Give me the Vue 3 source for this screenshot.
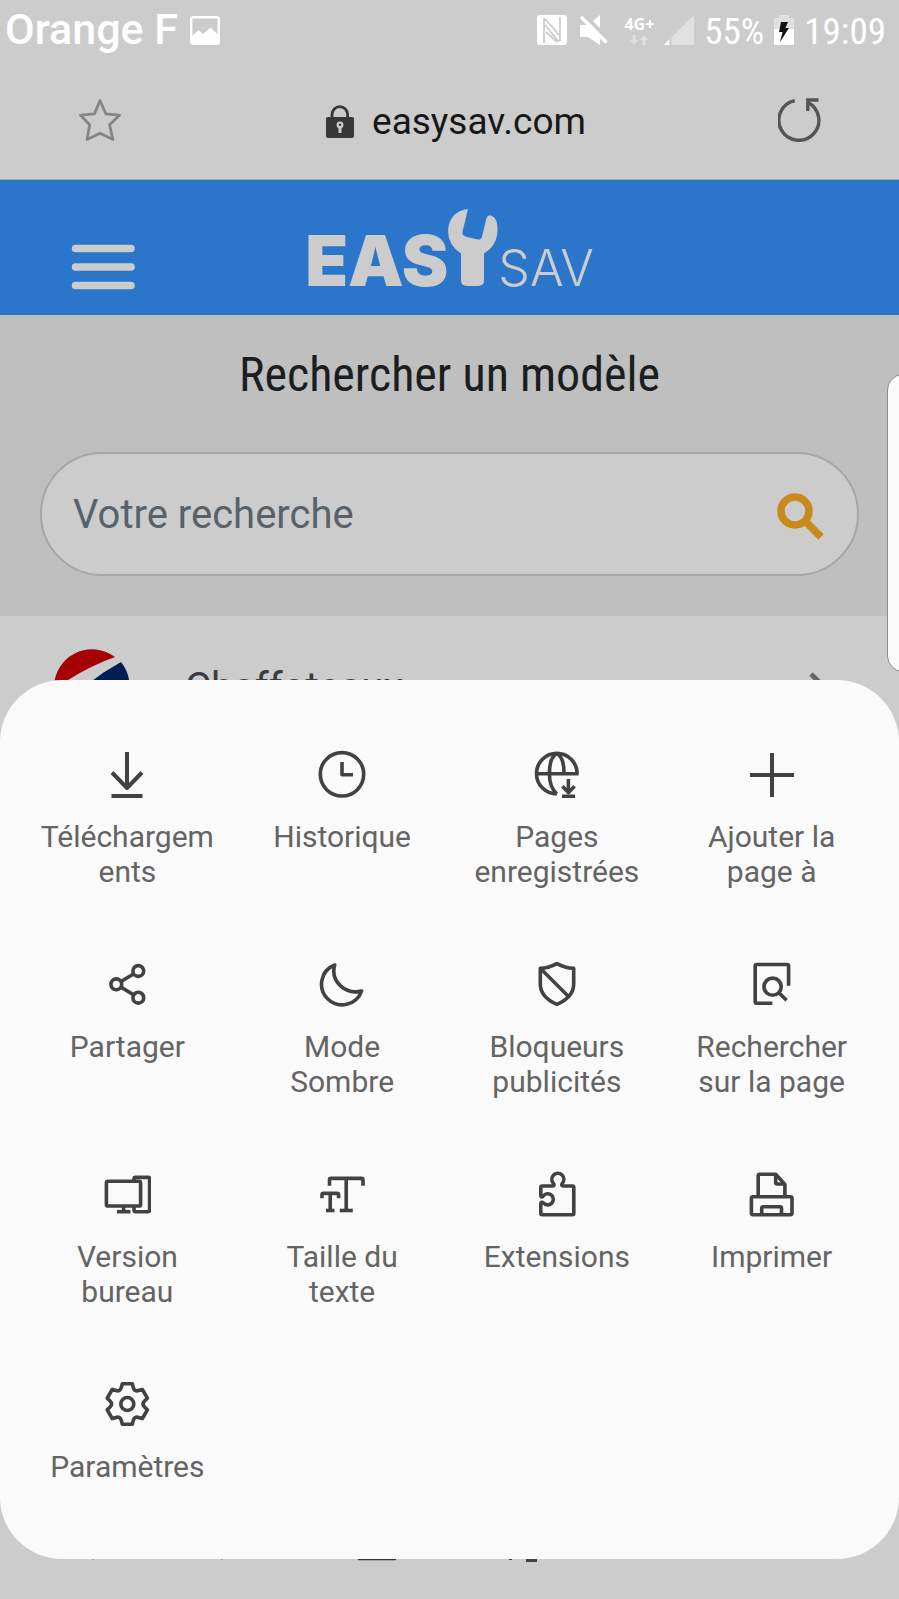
<script setup>
import { ref } from 'vue'

const query = ref('')

const circle = (cx, cy, r) =>
  `M${cx - r} ${cy}a${r} ${r} 0 1 0 ${2 * r} 0a${r} ${r} 0 1 0 ${-2 * r} 0Z`

// Six-toothed cog: one tooth profile turned round the centre
const gear = (cx, cy) => {
  const turn = (x, y, i) => {
    const a = (i * Math.PI) / 3
    return `${(cx + x * Math.cos(a) - y * Math.sin(a)).toFixed(2)} ${(cy + x * Math.sin(a) + y * Math.cos(a)).toFixed(2)}`
  }
  let d = ''
  for (let i = 0; i < 6; i++) {
    d += `${i ? 'L' : 'M'}${turn(-5, -20.3, i)}L${turn(5, -20.3, i)}L${turn(6, -16.4, i)}Q${turn(7.1, -12.3, i)} ${turn(-6, -16.4, i + 1)}`
  }
  return d + 'Z'
}

const items = [
  { label: 'Téléchargements', stroke: 4, paths: ['M24 2V38', 'M9 22.5L24 38L39 22.5', 'M8.5 46H39.5'] },
  { label: 'Historique', paths: [circle(24, 24.3, 21.7), 'M24 12V24.7H35'] },
  {
    label: 'Pages enregistrées',
    paths: [
      'M45.6 23.7H3.5',
      'M44.1 23.7A20.3 20.3 0 1 0 23.8 44',
      'M23.8 3.4C19 6 16.4 14 16.4 23.7S18.5 39 23.8 44',
      'M23.8 3.4C28.5 6 31.1 14 31.1 23.7',
      'M35.4 29V43',
      'M29.4 36.3L35.4 42.6L41.6 36.3',
      'M29 46.3H42',
    ],
  },
  { label: 'Ajouter la page à', stroke: 4, paths: ['M24 3V47', 'M2 25H46'] },
  {
    label: 'Partager',
    paths: [circle(13.3, 24.3, 5.4), circle(35.3, 11, 5.4), circle(35.3, 37.7, 5.4), 'M18 21.5L30.5 14', 'M18 27.1L30.5 34.8'],
  },
  { label: 'Mode Sombre', paths: ['M16.7 5A20.6 20.6 0 1 0 43.6 31C28 35 12 22 16.7 5Z'] },
  {
    label: 'Bloqueurs publicités',
    paths: ['M23.9 3.6Q16 8 7.3 8.4V24C7.3 34 14 40 23.9 44.4C34 40 40.7 34 40.7 24V8.4Q32 8 23.9 3.6Z', 'M8.5 9.5L35.5 36.5'],
  },
  {
    label: 'Rechercher sur la page',
    paths: ['M24.4 43.3H8.7Q7.2 43.3 7.2 41.8V6Q7.2 4.5 8.7 4.5H39.1Q40.6 4.5 40.6 6V25.7', circle(24.6, 26.7, 8.6), 'M31 32.900L38.6 40.2'],
  },
  {
    label: 'Version bureau',
    paths: [
      'M5 11.3H36Q37.6 11.3 37.6 12.9V34.4Q37.6 36 36 36H5Q3.4 36 3.4 34.4V12.9Q3.4 11.3 5 11.3Z',
      'M20.6 36V41.6',
      'M14 41.7H27.4',
      'M31 11V9Q31 7.4 32.6 7.4H45Q46.6 7.4 46.6 9V40.1Q46.6 41.7 45 41.7H32.6Q31 41.7 31 40.1V36',
    ],
  },
  {
    label: 'Taille du texte',
    paths: [
      'M11.5 15.8V10Q11.5 8.4 13.1 8.4H43.4Q45 8.4 45 10V15.8',
      'M28.2 8.4V40.5',
      'M21.8 40.5H34.8',
      'M4 28.2V24.9Q4 23.4 5.5 23.4H19Q20.6 23.4 20.6 24.9V28.2',
      'M12.2 23.4V40.5',
      'M8 40.5H16.5',
    ],
  },
  {
    label: 'Extensions',
    paths: [
      'M7.8 26V17.5Q7.8 16 9.3 16H19.5Q22 15.8 20.5 13.5A6 6 0 1 1 29.2 13.5Q27.8 15.8 30.3 16H39.3Q40.8 16 40.8 17.5V43.2Q40.8 44.7 39.3 44.7H9.3Q7.8 44.7 7.8 43.2V34Q8.2 31 10.5 33A5.6 5.6 0 1 0 10.5 25.6Q8.6 28.2 7.8 26Z',
    ],
  },
  {
    label: 'Imprimer',
    paths: [
      'M5 26.7H42.4Q44 26.7 44 28.3V43.1Q44 44.7 42.4 44.7H5Q3.4 44.7 3.4 43.1V28.3Q3.4 26.7 5 26.7Z',
      'M10.2 26.7V5.9Q10.2 4.3 11.8 4.3H27.7L36.9 14.4V26.7',
      'M27.7 4.3V12.5Q27.7 14 29.2 14H36.9',
      'M13.7 44.7V38.3Q13.7 36.7 15.3 36.7H31.9Q33.5 36.7 33.5 38.3V44.7',
    ],
  },
  { label: 'Paramètres', paths: [gear(24.3, 24), circle(24.3, 24, 6.5)] },
]
</script>

<template>
  <div class="screen">
    <header class="status">
      <div class="status-side">
        <span class="carrier">Orange F</span>
        <svg width="30" height="30" viewBox="0 0 30 30" aria-hidden="true">
          <rect x="1.2" y="2.2" width="27.6" height="26.6" rx="2" fill="none" stroke="#fff" stroke-width="2.4" />
          <path d="M2 21L8.500 15L13 19L20.500 12.500L28 19.500V28H2Z" fill="#fff" />
        </svg>
      </div>
      <div class="status-side status-right">
        <svg class="nfc" width="30" height="30" viewBox="0 0 30 30" aria-hidden="true">
          <rect width="30" height="30" rx="3" fill="#fff" />
          <path d="M7 3V28M23 2V26M8 4L18 15L22 20M8 10L22 27M9 17L20 27" fill="none" stroke="#ccc" stroke-width="1.800" />
        </svg>
        <svg class="mute" width="28" height="30" viewBox="0 0 28 30" aria-hidden="true">
          <path d="M0 10H8L20 0V30L8 22H0Z" fill="#fff" />
          <path d="M3 -1L29 25" stroke="#ccc" stroke-width="4" />
          <path d="M1 2L26.500 27.500" stroke="#fff" stroke-width="3.500" />
        </svg>
        <span class="network">
          <span>4G+</span>
          <svg width="18" height="10" viewBox="0 0 18 10" aria-hidden="true">
            <path d="M2.500 0H5.500V5H8L4 10L0 5H2.500ZM12.500 10H15.500V5H18L14 0L10 5H12.500Z" fill="#e0e0e0" />
          </svg>
        </span>
        <svg width="30" height="30" viewBox="0 0 30 30" aria-hidden="true">
          <path d="M0 30L30 0V30Z" fill="#e1e1e1" />
          <path d="M0 30L5.500 24.500V30Z" fill="#fff" />
          <path d="M6.500 22V30" stroke="#ccc" stroke-width="2" />
        </svg>
        <span class="clock">55%</span>
        <svg width="20" height="30" viewBox="0 0 20 30" aria-hidden="true">
          <path d="M5 3V0H15V3H20V14H0V3Z" fill="#e0e0e0" />
          <path d="M0 14H20V30H0Z" fill="#fff" />
          <path d="M7 7H14L11.500 13H15L6 27L8.500 17H5Z" fill="#111" />
        </svg>
        <span class="clock">19:09</span>
      </div>
    </header>

    <div class="address">
      <button class="plain" type="button" aria-label="Favori">
        <svg width="42" height="44" viewBox="0 0 42 44">
          <path d="M21 2.500L26.800 15.800L40.500 17.200L30.500 26.700L34 41.500L21 35.200L8 41.500L10.700 26.700L1.500 17.200L15.500 15.800Z" fill="none" stroke="#858585" stroke-width="2.800" stroke-linejoin="round" />
        </svg>
      </button>
      <div class="site">
        <svg width="42" height="34" viewBox="0 0 42 34" aria-hidden="true">
          <path d="M19 14V9.500A7.800 7.800 0 0 1 34.600 9.500V14" fill="none" stroke="#373737" stroke-width="2.800" />
          <path d="M15 12H39Q41 12 41 14V31Q41 33 39 33H15Q13 33 13 31V14Q13 12 15 12Z" fill="#373737" />
          <circle cx="27" cy="20" r="3.400" fill="#ccc" />
          <path d="M27 21V28" stroke="#ccc" stroke-width="3" />
          <circle cx="27" cy="19.800" r="1.200" fill="#373737" />
        </svg>
        <span>easysav.com</span>
      </div>
      <button class="plain" type="button" aria-label="Actualiser">
        <svg width="44" height="44" viewBox="0 0 44 44">
          <path d="M16.800 2.700A20 20 0 1 0 30 4.500" fill="none" stroke="#555" stroke-width="3.400" />
          <path d="M40.500 2H29.800V13" fill="none" stroke="#555" stroke-width="3.400" />
        </svg>
      </button>
    </div>

    <main>
      <div class="brand">
        <button class="plain burger" type="button" aria-label="Menu">
          <svg width="64" height="46" viewBox="0 0 64 46">
            <path d="M4.500 4.500H60M4.500 23H60M4.500 41.500H60" stroke="#ccc" stroke-width="7.500" stroke-linecap="round" />
          </svg>
        </button>
        <div class="logo">
          <span class="eas">EAS</span>
          <svg width="50" height="77" viewBox="0 0 50 78" preserveAspectRatio="none" aria-hidden="true">
            <path d="M19 0Q3 3 .5 18Q-2 35 13 45V72Q13 78 19 78H30Q36 78 36 72V45Q49 37 49.500 22Q50 10 44 7Q40 5 38.500 9L34 28Q33 31 30 31L18 28Q14 27 14.500 23L19.500 2Q20 0 19 0Z" fill="#ccc" />
          </svg>
          <span class="sav">SAV</span>
        </div>
      </div>

      <form class="search" @submit.prevent>
        <h1><label for="model">Rechercher un modèle</label></h1>
        <div class="field">
          <input id="model" v-model="query" type="text" placeholder="Votre recherche" />
          <button class="plain find" type="submit" aria-label="Rechercher">
            <svg width="48" height="48" viewBox="0 0 48 48">
              <circle cx="19" cy="18" r="14" fill="none" stroke="#c98a1c" stroke-width="7.500" />
              <path d="M28 27L45 44" stroke="#c98a1c" stroke-width="7.500" />
            </svg>
          </button>
        </div>
      </form>

      <a class="maker" href="#chaffoteaux">
        <svg width="76" height="76" viewBox="0 0 76 76" aria-hidden="true">
          <path d="M0 38A38 38 0 0 1 61 9Q38 17 14 32L2 46Q0 42 0 38Z" fill="#a50006" />
          <path d="M67 14A38 38 0 0 1 38 76Q18 76 8 60Q34 32 67 14Z" fill="#001d53" />
        </svg>
        <span>Chaffoteaux</span>
        <svg width="18" height="28" viewBox="0 0 18 28" aria-hidden="true">
          <path d="M2 2L14 14L2 26" fill="none" stroke="#666" stroke-width="5" />
        </svg>
      </a>
    </main>

    <nav class="toolbar" aria-label="Navigation">
      <svg width="40" height="40" viewBox="0 0 40 40"><path d="M32 3L13 20L32 36" fill="none" stroke="#424242" stroke-width="2" /></svg>
      <svg width="40" height="40" viewBox="0 0 40 40"><path d="M12 3L31 20L12 36" fill="none" stroke="#424242" stroke-width="2" /></svg>
      <svg width="40" height="40" viewBox="0 0 40 40"><path d="M3 36V16L21 3L39 16V36Z" fill="none" stroke="#333" stroke-width="2.500" stroke-linejoin="round" /></svg>
      <svg width="40" height="40" viewBox="0 0 40 40"><path d="M7.500 37V6H28V37M23 37.500H34" fill="none" stroke="#424242" stroke-width="3" /></svg>
    </nav>

    <div class="edge-panel"></div>

    <section class="sheet" aria-label="Menu du navigateur">
      <button v-for="item in items" :key="item.label" class="plain tile" type="button">
        <svg width="48" height="48" viewBox="0 0 48 48" fill="none" stroke="#424242" :stroke-width="item.stroke || 3.6" stroke-linejoin="round" aria-hidden="true">
          <path v-for="d in item.paths" :key="d" :d="d" />
        </svg>
        <span>{{ item.label }}</span>
      </button>
    </section>
  </div>
</template>

<style>
body {
  background: #ccc;
}
</style>

<style scoped>
.screen {
  position: relative;
  display: flex;
  flex-direction: column;
  min-height: 100vh;
  overflow: hidden;
  background: #ccc;
  font-family: Roboto, "Liberation Sans", sans-serif;
}

svg {
  display: block;
  flex: none;
}

.plain {
  padding: 0;
  border: 0;
  background: none;
  font: inherit;
  cursor: pointer;
}

.status {
  display: flex;
  justify-content: space-between;
  align-items: center;
  height: 60px;
  padding: 0 13px 0 5px;
  color: #fff;
}

.status-side {
  display: flex;
  align-items: center;
  gap: 12px;
}

.status-right {
  gap: 10px;
}

.carrier {
  font-size: 43px;
  line-height: 56px;
  padding-bottom: 3px;
  font-weight: 500;
}

.nfc {
  margin-right: 3px;
}

.mute {
  margin-right: 6px;
}

.network {
  display: flex;
  flex-direction: column;
  align-items: center;
  gap: 3px;
  font-family: "Noto Sans", sans-serif;
  font-size: 16px;
  line-height: 16px;
  font-weight: 700;
}

.clock {
  padding-top: 3px;
  font-family: "Roboto Condensed", Roboto, sans-serif;
  font-size: 37px;
  line-height: 56px;
}

.address {
  display: flex;
  justify-content: space-between;
  align-items: center;
  height: 119px;
  padding: 0 77px 0 79px;
  border-bottom: 1px solid #9aabb4;
}

.site {
  display: flex;
  align-items: center;
  gap: 17px;
  padding-top: 4px;
  color: #171717;
  font-size: 37px;
  line-height: 44px;
}

.brand {
  display: grid;
  grid-template-columns: 1fr auto 1fr;
  height: 135px;
  padding: 0 71px;
  background: #2b76ca;
}

.burger {
  justify-self: start;
  align-self: start;
  padding-top: 64px;
}

.logo {
  display: flex;
  align-items: baseline;
  align-self: start;
  padding-top: 29px;
  color: #ccc;
  font-family: Inter, sans-serif;
  line-height: 72px;
}

.eas {
  font-size: 70px;
  font-weight: 900;
}

.sav {
  font-size: 50px;
  font-weight: 300;
}

.search {
  padding: 28px 40px 40px;
  background: #bfbfbf;
}

h1 {
  margin: 0 0 45px;
  color: #1b1e20;
  font-family: "Roboto Condensed", Roboto, sans-serif;
  font-size: 48px;
  line-height: 64px;
  font-weight: 400;
  text-align: center;
}

.field {
  display: flex;
  align-items: center;
  height: 120px;
  padding: 0 33px 0 31px;
  border: 2px solid #a2a7ab;
  border-radius: 62px;
  background: #ccc;
}

.field input {
  flex: 1;
  min-width: 0;
  padding: 2px 0 0;
  border: 0;
  outline: 0;
  background: none;
  color: #5a6269;
  font: 40px/56px Roboto, sans-serif;
}

.field input::placeholder {
  color: #5a6269;
  opacity: 1;
}

.find {
  padding-top: 6px;
}

.maker {
  display: flex;
  align-items: center;
  padding: 32px 72px 32px 54px;
  color: #3a3d40;
  font-size: 40px;
  line-height: 48px;
  text-decoration: none;
}

.maker span {
  flex: 1;
  padding: 4px 0 0 55px;
}

.toolbar {
  display: grid;
  grid-template-columns: repeat(6, 1fr);
  justify-items: center;
  margin-top: auto;
  padding: 0 9px 36px;
}

.edge-panel {
  position: absolute;
  top: 374px;
  right: -20px;
  width: 30px;
  height: 296px;
  border: 1px solid #8c8c8c;
  border-radius: 18px;
  background: #fafafa;
}

.sheet {
  position: absolute;
  right: 0;
  bottom: 40px;
  left: 0;
  display: grid;
  grid-template-columns: repeat(4, 1fr);
  row-gap: 71px;
  padding: 70px 20px 40px;
  border-radius: 62px;
  background: #fafafa;
}

.tile {
  display: flex;
  flex-direction: column;
  align-items: center;
  gap: 21px;
  color: #646464;
  font-size: 30px;
  line-height: 35px;
}

.tile span {
  width: 176px;
  min-height: 70px;
  overflow-wrap: anywhere;
}
</style>
